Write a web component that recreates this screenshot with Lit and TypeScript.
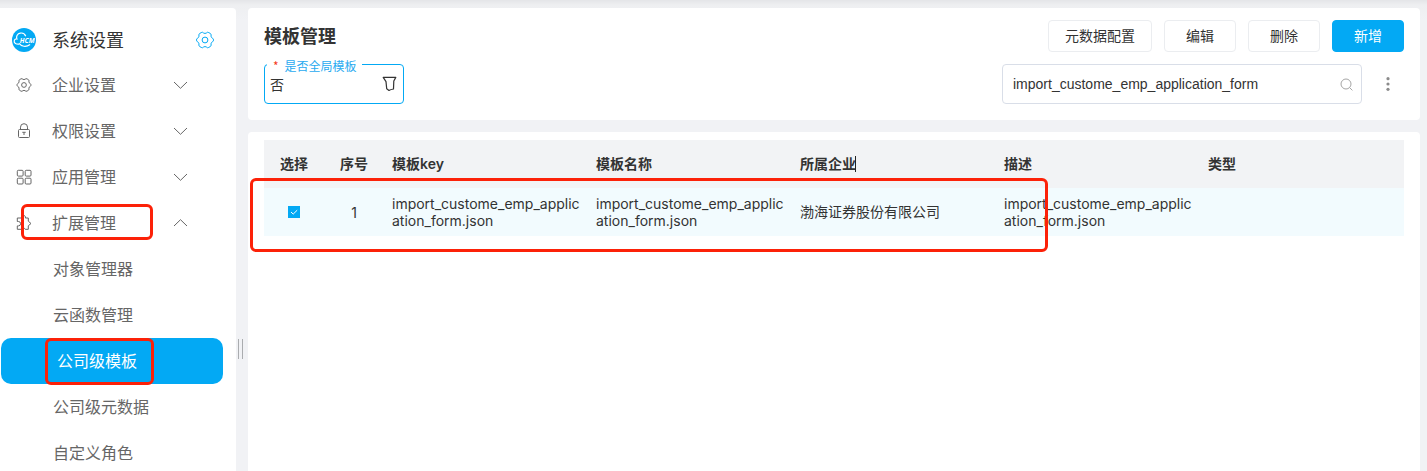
import { LitElement, html, css, svg } from "lit";
import { customElement } from "lit/decorators.js";

const gear = svg`<path d="M5.2 1.6Q6.7 .7 7.6 2Q9 2.9 10.4 2Q11.3 .7 12.8 1.6L14.6 2.7Q15.5 3.7 15 5.2Q15.2 6.7 16.7 7.3Q17.5 8 17.5 9Q17.5 10 16.7 10.7Q15.2 11.3 15 12.8Q15.5 14.3 14.6 15.3L12.8 16.4Q11.3 17.3 10.4 16Q9 15.1 7.6 16Q6.7 17.3 5.2 16.4L3.4 15.3Q2.5 14.3 3 12.8Q2.8 11.3 1.3 10.7Q.5 10 .5 9Q.5 8 1.3 7.3Q2.8 6.7 3 5.2Q2.5 3.7 3.4 2.7Z"/><circle cx="9" cy="9" r="2.9"/>`;
const smallGear = svg`<g transform="translate(1.6 1.6) scale(.82)" stroke-width="1.2">${gear}</g>`;
const lock = svg`<rect x="3.5" y="7.5" width="11" height="8" rx="1"/><path d="M5.5 7.5V5.2a3.5 3.5 0 0 1 7 0v2.3M7.3 10.3h3.4M9 10.3v2.7"/>`;
const grid = svg`<rect x="2.3" y="2.3" width="5.8" height="5.8" rx="1"/><rect x="10.2" y="2.3" width="5.8" height="5.8" rx="1"/><rect x="2.3" y="10.2" width="5.8" height="5.8" rx="1"/><rect x="10.2" y="10.2" width="5.8" height="5.8" rx="1"/>`;
const puzzle = svg`<path d="M2.3 4H6.6a2 2 0 1 1 3.8 0H13.3V7.2L16 9.5 13.3 11.8V15.3H10.2a1.8 1.8 0 0 0-3.4 0H2.3V11.9H3.4a2 2 0 0 0 0-4.4H2.3Z"/>`;

const groups = [
  { label: "企业设置", icon: smallGear, open: false },
  { label: "权限设置", icon: lock, open: false },
  { label: "应用管理", icon: grid, open: false },
  { label: "扩展管理", icon: puzzle, open: true },
];
const pages = ["对象管理器", "云函数管理", "公司级模板", "公司级元数据", "自定义角色"];
const key = "import_custome_emp_application_form";

@customElement("side-nav")
export class SideNav extends LitElement {
  static styles = css`
    :host { display: block; width: 236px; flex: none; background: #fff; border-radius: 0 4px 0 0; overflow: hidden; color: #666; }
    svg { display: block; fill: none; stroke: currentColor; }
    .head { display: flex; align-items: center; height: 44px; padding: 0 22px 0 12px; box-sizing: border-box; margin-top: 10px; color: #333; font-size: 18px; }
    .title { flex: 1; margin-left: 16px; padding-bottom: 2px; }
    .blue { color: #03a9f4; }
    .row { display: flex; align-items: center; height: 46px; font-size: 16px; line-height: 24px; }
    .row.page { box-sizing: border-box; padding-bottom: 3px; }
    .group { padding: 0 48px 0 15px; }
    .label { flex: 1; margin-left: 19px; padding-bottom: 3px; }
    .page { padding-left: 53px; }
    .active { position: relative; margin: 0 13px 0 1px; padding-left: 56px; border-radius: 10px; background: #03a9f4; color: #fff; }
    .mark, .mark-active { position: relative; }
    .mark::after, .mark-active::after { content: ""; position: absolute; border: 3px solid #fc2108; border-radius: 6px; box-sizing: border-box; }
    .mark::after { left: 21px; top: 4px; width: 132px; height: 36px; }
    .mark-active::after { left: 44px; top: 0; width: 109px; height: 47px; }
  `;
  render() {
    return html`
      <div class="head">
        <svg width="24" height="24" viewBox="0 0 24 24">
          <circle cx="12" cy="12" r="12" fill="#03a9f4" stroke="none"/>
          <path d="M7.3 16.1C4.1 16.5 1.9 15.2 2.2 13C2.4 11.4 3.7 10.7 4.9 10.9C3.9 8.5 5.4 5.5 8.3 5.1C10.9 4.7 13 6 13.7 8.2M7.2 15.3C9.1 18.7 14.1 19.4 18.1 16.6" stroke="#fff" stroke-width="1.2"/>
          <text x="7.8" y="14.6" font-family="Open Sans, sans-serif" font-size="7" font-weight="700" font-style="italic" textLength="14.8" lengthAdjust="spacingAndGlyphs" fill="#fff" stroke="none">HCM</text>
        </svg>
        <span class="title">系统设置</span>
        <svg class="blue" width="18" height="18" viewBox="0 0 18 18">${gear}</svg>
      </div>
      ${groups.map((g) => html`
        <div class="row group ${g.open ? "mark" : ""}">
          <svg width="18" height="18" viewBox="0 0 18 18">${g.icon}</svg>
          <span class="label">${g.label}</span>
          <svg width="15" height="10" viewBox="0 0 15 10"><path d=${g.open ? "M1 8 7.5 1.7 14 8" : "M1 2 7.5 8.3 14 2"}/></svg>
        </div>`)}
      ${pages.map((p, i) => html`<div class="row page ${i === 2 ? "active mark-active" : ""}">${p}</div>`)}
    `;
  }
}

@customElement("template-toolbar")
export class TemplateToolbar extends LitElement {
  static styles = css`
    :host { display: block; height: 112px; box-sizing: border-box; padding: 12px 16px 0; background: #fff; border-radius: 4px; color: #333; }
    svg { display: block; fill: none; stroke: currentColor; }
    .top, .bottom, .actions { display: flex; align-items: center; }
    .top { justify-content: space-between; height: 32px; }
    .bottom { justify-content: space-between; margin-top: 12px; height: 40px; }
    .title { font-size: 18px; font-weight: 700; padding-bottom: 2px; }
    .actions { gap: 12px; }
    .btn { display: flex; align-items: center; justify-content: center; box-sizing: border-box; height: 32px; width: 72px; padding-bottom: 2px; border: 1px solid #ebedf0; border-radius: 4px; font-size: 14px; }
    .wide { width: 104px; }
    .primary { background: #03a9f4; border-color: #03a9f4; color: #fff; }
    .filter { position: relative; display: flex; align-items: center; justify-content: space-between; box-sizing: border-box; width: 140px; height: 40px; padding: 0 6px 0 5px; border: 1px solid #03a9f4; border-radius: 4px; font-size: 14px; }
    .legend { position: absolute; left: 2px; top: -8px; height: 18px; line-height: 18px; padding: 0 5px 0 6px; background: #fff; color: #29aaf0; font-size: 12px; white-space: nowrap; }
    .star { color: #f43b1c; margin-right: 6px; }
    .search { display: flex; align-items: center; justify-content: space-between; box-sizing: border-box; width: 360px; height: 40px; padding: 0 8px 0 10px; border: 1px solid #d9dee8; border-radius: 4px; font: 14px "Liberation Sans", sans-serif; }
    .glass { color: #a5a5a5; }
    .more { color: #8b8b8b; margin: 0 14px 0 12px; }
    .more circle { fill: currentColor; stroke: none; }
  `;
  render() {
    return html`
      <div class="top">
        <span class="title">模板管理</span>
        <div class="actions">
          <div class="btn wide">元数据配置</div><div class="btn">编辑</div><div class="btn">删除</div><div class="btn primary">新增</div>
        </div>
      </div>
      <div class="bottom">
        <div class="filter">
          <span class="legend"><span class="star">*</span>是否全局模板</span>
          <span>否</span>
          <svg width="15" height="16" viewBox="0 0 15 16"><path d="M1.2 1.4H13.8L11.8 5 11.5 13Q8.4 13.5 7 14.4L4.7 12.8 4 5.6Z" stroke-width="1.2" stroke-linejoin="round"/></svg>
        </div>
        <div class="actions">
          <div class="search"><span>${key}</span>
            <svg class="glass" width="13" height="13" viewBox="0 0 13 13"><circle cx="6" cy="6" r="5"/><path d="m9.6 9.6 2.8 2.8"/></svg>
          </div>
          <svg class="more" width="4" height="16" viewBox="0 0 4 16"><circle cx="2" cy="2.7" r="1.6"/><circle cx="2" cy="8" r="1.6"/><circle cx="2" cy="13.3" r="1.6"/></svg>
        </div>
      </div>`;
  }
}

@customElement("template-table")
export class TemplateTable extends LitElement {
  static styles = css`
    :host { display: block; flex: 1; padding: 8px 16px 0; background: #fff; border-radius: 4px 4px 0 0; color: #333; font-size: 14px; }
    .row { display: grid; grid-template-columns: 60px 60px repeat(4, 204px) 1fr; align-items: center; height: 48px; line-height: 20px; }
    .head { background: #f2f3f5; font-weight: 700; }
    .head > div, .company { padding-bottom: 2px; }
    .latin { font-weight: 600; font-family: Inter, sans-serif; }
    .body { position: relative; background: #f2fbfe; }
    .center { text-align: center; }
    .cell { padding-left: 8px; }
    .key { font-family: Inter, sans-serif; line-height: 17px; width: 190px; word-break: break-all; }
    .num { font-family: Inter, sans-serif; padding-top: 1px; }
    .check { display: block; width: 12px; height: 12px; margin: 0 auto; fill: none; stroke: #fff; background: #03a9f4; }
    .caret { display: inline-block; width: 1px; height: 16px; margin: -4px 0 0 -1px; background: #222; vertical-align: -3px; }
    .body::after { content: ""; position: absolute; left: -14px; top: -10px; width: 798px; height: 74px; box-sizing: border-box; border: 3px solid #fc2108; border-radius: 6px; }
  `;
  render() {
    const file = html`<div class="cell"><div class="key">${key}.json</div></div>`;
    return html`
      <div class="row head">
        <div class="center">选择</div><div class="center">序号</div>
        <div class="cell">模板<span class="latin">key</span></div><div class="cell">模板名称</div>
        <div class="cell">所属企业<span class="caret"></span></div><div class="cell">描述</div><div class="cell">类型</div>
      </div>
      <div class="row body">
        <svg class="check" viewBox="0 0 12 12"><path d="m3 6 2.2 2.1L9.2 4.2"/></svg>
        <div class="center num">1</div>${file}${file}<div class="cell company">渤海证券股份有限公司</div>${file}<div></div>
      </div>`;
  }
}

@customElement("app-root")
export class AppRoot extends LitElement {
  static styles = css`
    :host { display: block; height: 471px; overflow: hidden; background: linear-gradient(#e4e5e8 0, #eeeff1 5px, #f1f2f5 20px); font-family: "Noto Sans CJK SC", sans-serif; }
    .shell { display: flex; height: 463px; padding-top: 8px; }
    .handle { display: flex; gap: 3px; align-items: center; width: 12px; padding-left: 2px; box-sizing: border-box; flex: none; }
    .bar { width: 1px; height: 20px; margin-top: 218px; background: #aaacaf; }
    .main { flex: 1; min-width: 0; display: flex; flex-direction: column; gap: 12px; margin-right: 7px; }
  `;
  render() {
    return html`<div class="shell">
      <side-nav></side-nav>
      <div class="handle"><div class="bar"></div><div class="bar"></div></div>
      <div class="main"><template-toolbar></template-toolbar><template-table></template-table></div>
    </div>`;
  }
}
